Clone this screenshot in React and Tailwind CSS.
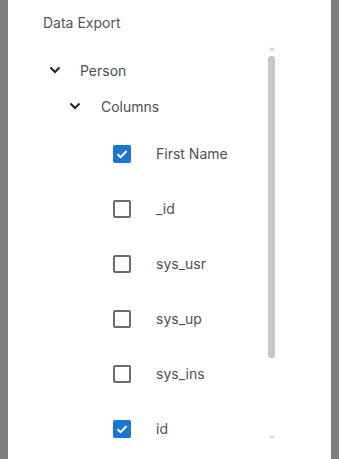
import { useState } from "react";

const initialColumns = [
  { name: "First Name", checked: true },
  { name: "_id", checked: false },
  { name: "sys_usr", checked: false },
  { name: "sys_up", checked: false },
  { name: "sys_ins", checked: false },
  { name: "id", checked: true },
];

const Chevron = ({ className }) => (
  <svg width="12" height="8" viewBox="0 0 12 8" className={className}>
    <path d="M1.5 1.5 L6 6 L10.5 1.5" fill="none" stroke="#222" strokeWidth="2" />
  </svg>
);

const CheckBox = ({ checked, onClick }) =>
  checked ? (
    <button
      onClick={onClick}
      className="flex h-[18px] w-[18px] shrink-0 items-center justify-center rounded-[2px] bg-[#1976d2]"
    >
      <svg width="14" height="14" viewBox="0 0 14 14">
        <path d="M2.5 7.2 L5.6 10.2 L11.6 4" fill="none" stroke="#fff" strokeWidth="2" />
      </svg>
    </button>
  ) : (
    <button
      onClick={onClick}
      className="h-[18px] w-[18px] shrink-0 rounded-[2px] border-2 border-[#6b6b6b]"
    />
  );

const App = () => {
  const [columns, setColumns] = useState(initialColumns);

  const toggle = (index) => {
    setColumns((prev) =>
      prev.map((col, i) => (i === index ? { ...col, checked: !col.checked } : col))
    );
  };

  return (
    <div
      className="flex h-[459px] bg-[#7d7d7d] px-2"
      style={{ fontFamily: "Inter, 'Noto Sans', sans-serif" }}
    >
      <div className="flex flex-1 flex-col overflow-hidden bg-white">
        <h1 className="pl-[35px] pt-[13px] text-[14px] leading-[20px] text-[#555]">
          Data Export
        </h1>

        <div className="mt-[12px] flex h-[400px]">
          <div className="w-[259px] overflow-hidden pt-[7px] text-[14px] text-[#505050]">
            <div className="flex h-[36px] items-center pl-[41px]">
              <Chevron />
              <span className="ml-[19px]">Person</span>
            </div>
            <div className="flex h-[36px] items-center pl-[61px]">
              <Chevron />
              <span className="ml-[20px]">Columns</span>
            </div>
            <div className="pt-[2px]">
              {columns.map((col, i) => (
                <div key={col.name} className="flex h-[55px] items-center pl-[105px]">
                  <CheckBox checked={col.checked} onClick={() => toggle(i)} />
                  <span className="ml-[25px]">{col.name}</span>
                </div>
              ))}
            </div>
          </div>

          <div className="flex w-[9px] flex-col items-center">
            <div className="mt-[2px] h-0 w-0 border-x-[3px] border-b-[3px] border-x-transparent border-b-[#cfcfcf]" />
            <div className="mt-[6px] h-[302px] w-[7px] rounded-[3px] bg-[#c6c6c6]" />
            <div className="mt-[78px] h-0 w-0 border-x-[3px] border-t-[3px] border-x-transparent border-t-[#cfcfcf]" />
          </div>
        </div>
      </div>
    </div>
  );
};

export default App;
